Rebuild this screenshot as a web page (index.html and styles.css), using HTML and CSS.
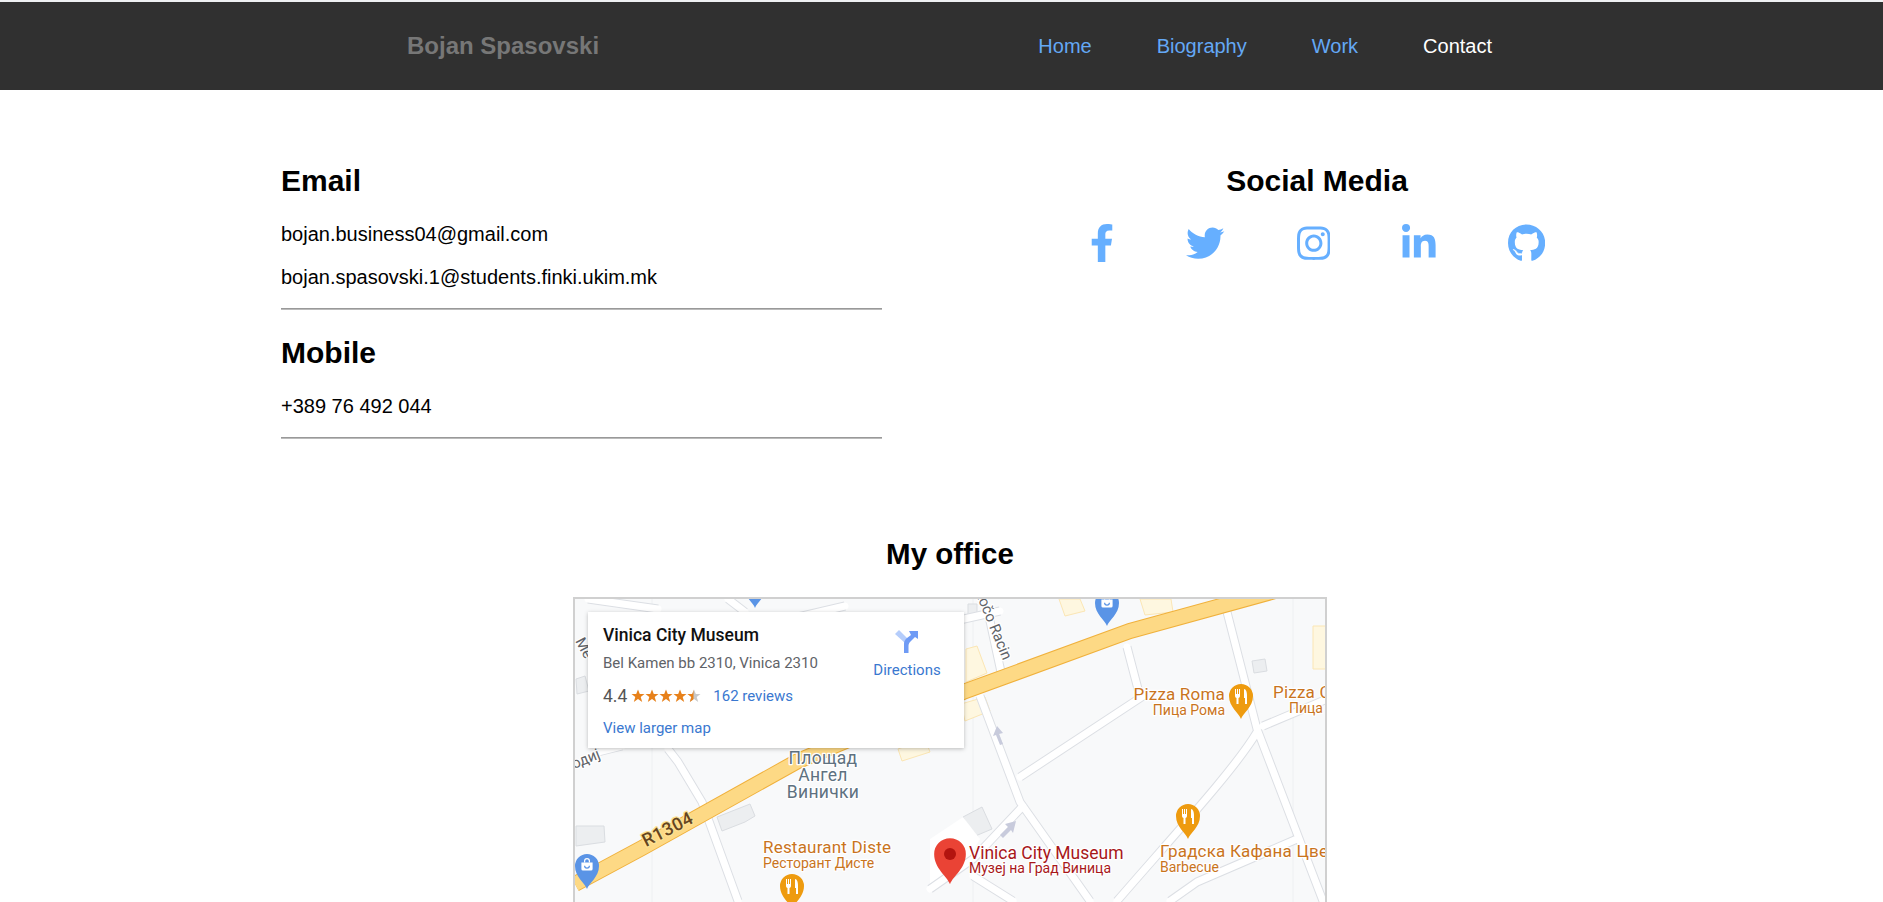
FILE: index.html
```html
<!DOCTYPE html>
<html lang="en">
<head>
<meta charset="utf-8">
<title>Contact - Bojan Spasovski</title>
<link rel="stylesheet" href="styles.css">
</head>
<body>
<nav class="topbar">
  <a class="brand" href="#">Bojan Spasovski</a>
  <ul class="menu">
    <li><a href="#">Home</a></li>
    <li><a href="#">Biography</a></li>
    <li><a href="#">Work</a></li>
    <li><a class="active" href="#">Contact</a></li>
  </ul>
</nav>
<main class="contact">
  <section class="details">
    <h2>Email</h2>
    <p>bojan.business04@gmail.com</p>
    <p>bojan.spasovski.1@students.finki.ukim.mk</p>
    <hr>
    <h2>Mobile</h2>
    <p>+389 76 492 044</p>
    <hr>
  </section>
  <section class="social">
    <h2>Social Media</h2>
    <div class="icons">
      <svg class="i-f" viewBox="0 0 320 512"><path d="M279.14 288l14.22-92.66h-88.91v-60.13c0-25.35 12.42-50.06 52.24-50.06h40.42V6.26S260.43 0 225.36 0c-73.22 0-121.08 44.38-121.08 124.72v70.62H22.89V288h81.39v224h100.17V288z"/></svg>
      <svg class="i-t" viewBox="0 0 512 512"><path d="M459.37 151.716c.325 4.548.325 9.097.325 13.645 0 138.72-105.583 298.558-298.558 298.558-59.452 0-114.68-17.219-161.137-47.106 8.447.974 16.568 1.299 25.34 1.299 49.055 0 94.213-16.568 130.274-44.832-46.132-.975-84.792-31.188-98.112-72.772 6.498.974 12.995 1.624 19.818 1.624 9.421 0 18.843-1.3 27.614-3.573-48.081-9.747-84.143-51.98-84.143-102.985v-1.299c13.969 7.797 30.214 12.67 47.431 13.319-28.264-18.843-46.781-51.005-46.781-87.391 0-19.492 5.197-37.36 14.294-52.954 51.655 63.675 129.3 105.258 216.365 109.807-1.624-7.797-2.599-15.918-2.599-24.04 0-57.828 46.782-104.934 104.934-104.934 30.213 0 57.502 12.67 76.67 33.137 23.715-4.548 46.456-13.32 66.599-25.34-7.798 24.366-24.366 44.833-46.132 57.827 21.117-2.273 41.584-8.122 60.426-16.243-14.292 20.791-32.161 39.308-52.628 54.253z"/></svg>
      <svg class="i-i" viewBox="0 0 448 512"><path d="M224.1 141c-63.6 0-114.9 51.3-114.9 114.9s51.3 114.9 114.9 114.9S339 319.5 339 255.9 287.7 141 224.1 141zm0 189.6c-41.1 0-74.7-33.5-74.7-74.7s33.5-74.7 74.7-74.7 74.7 33.5 74.7 74.7-33.6 74.7-74.7 74.7zm146.4-194.3c0 14.9-12 26.8-26.8 26.8-14.9 0-26.8-12-26.8-26.8s12-26.8 26.8-26.8 26.8 12 26.8 26.8zm76.1 27.2c-1.7-35.9-9.9-67.7-36.2-93.9-26.2-26.2-58-34.4-93.9-36.2-37-2.1-147.9-2.1-184.9 0-35.8 1.7-67.6 9.9-93.9 36.1s-34.4 58-36.2 93.9c-2.1 37-2.1 147.9 0 184.9 1.7 35.9 9.9 67.7 36.2 93.9s58 34.4 93.9 36.2c37 2.1 147.9 2.1 184.9 0 35.9-1.7 67.7-9.9 93.9-36.2 26.2-26.2 34.4-58 36.2-93.9 2.1-37 2.1-147.8 0-184.8zM398.8 388c-7.8 19.6-22.9 34.7-42.6 42.6-29.5 11.7-99.5 9-132.1 9s-102.7 2.6-132.1-9c-19.6-7.8-34.7-22.9-42.6-42.6-11.7-29.5-9-99.5-9-132.1s-2.6-102.7 9-132.1c7.8-19.6 22.9-34.7 42.6-42.6 29.5-11.7 99.5-9 132.1-9s102.7-2.6 132.1 9c19.6 7.8 34.7 22.9 42.6 42.6 11.7 29.5 9 99.5 9 132.1s2.7 102.7-9 132.1z"/></svg>
      <svg class="i-i" viewBox="0 0 448 512"><path d="M100.28 448H7.4V148.9h92.88zM53.79 108.1C24.09 108.1 0 83.5 0 53.8a53.79 53.79 0 0 1 107.58 0c0 29.7-24.1 54.3-53.79 54.3zM447.9 448h-92.68V302.4c0-34.7-.7-79.2-48.29-79.2-48.29 0-55.69 37.7-55.69 76.7V448h-92.78V148.9h89.08v40.8h1.3c12.4-23.5 42.69-48.3 87.88-48.3 94 0 111.28 61.9 111.28 142.3V448z"/></svg>
      <svg class="i-g" viewBox="0 0 496 512"><path d="M165.9 397.4c0 2-2.3 3.6-5.2 3.6-3.3.3-5.6-1.3-5.6-3.6 0-2 2.3-3.6 5.2-3.6 3-.3 5.6 1.3 5.6 3.6zm-31.1-4.5c-.7 2 1.3 4.3 4.3 4.9 2.6 1 5.6 0 6.2-2s-1.3-4.3-4.3-5.2c-2.6-.7-5.5.3-6.2 2.3zm44.2-1.7c-2.9.7-4.9 2.6-4.6 4.9.3 2 2.9 3.3 5.9 2.6 2.9-.7 4.9-2.6 4.6-4.6-.3-1.9-3-3.2-5.9-2.9zM244.8 8C106.1 8 0 113.3 0 252c0 110.9 69.8 205.8 169.5 239.2 12.8 2.3 17.3-5.6 17.3-12.1 0-6.2-.3-40.4-.3-61.4 0 0-70 15-84.7-29.8 0 0-11.4-29.1-27.8-36.6 0 0-22.9-15.7 1.6-15.4 0 0 24.9 2 38.6 25.8 21.9 38.6 58.6 27.5 72.9 20.9 2.3-16 8.8-27.1 16-33.7-55.9-6.2-112.3-14.3-112.3-110.5 0-27.5 7.6-41.3 23.6-58.9-2.6-6.5-11.1-33.3 2.6-67.9 20.9-6.5 69 27 69 27 20-5.6 41.5-8.5 62.8-8.5s42.8 2.9 62.8 8.5c0 0 48.1-33.6 69-27 13.7 34.7 5.2 61.4 2.6 67.9 16 17.7 25.8 31.5 25.8 58.9 0 96.5-58.9 104.2-114.8 110.5 9.2 7.9 17 22.9 17 46.4 0 33.7-.3 75.4-.3 83.6 0 6.5 4.6 14.4 17.3 12.1C428.2 457.8 496 362.9 496 252 496 113.3 383.5 8 244.8 8zM97.2 352.9c-1.3 1-1 3.3.7 5.2 1.6 1.6 3.9 2.3 5.2 1 1.3-1 1-3.3-.7-5.2-1.6-1.6-3.9-2.3-5.2-1zm-10.8-8.1c-.7 1.3.3 2.9 2.3 3.9 1.6 1 3.6.7 4.3-.7.7-1.3-.3-2.9-2.3-3.9-2-.6-3.6-.3-4.3.7zm32.4 35.6c-1.6 1.3-1 4.3 1.3 6.2 2.3 2.3 5.2 2.6 6.5 1 1.3-1.3.7-4.3-1.3-6.2-2.2-2.3-5.2-2.6-6.5-1zm-11.4-14.7c-1.6 1-1.6 3.6 0 5.9 1.6 2.3 4.3 3.3 5.6 2.3 1.6-1.3 1.6-3.9 0-6.2-1.4-2.3-4-3.3-5.6-2z"/></svg>
    </div>
  </section>
</main>
<section class="office">
  <h2>My office</h2>
  <div class="map">
    <svg class="map-canvas" viewBox="0 0 750 450">
      <defs>
        <path id="pin" d="M0 23C-2 17-12 11-12 0A12 12 0 1 1 12 0C12 11 2 17 0 23Z"/>
        <g id="cutlery">
          <path d="M-6-7h1v5h1v-5h1v5h1v-5h1v7c0 1-1 2-1.500 2V8h-2V2c-.5 0-1.500-1-1.500-2z"/>
          <path d="M3-7c2 0 3 3 3 7v8H4V2H3z"/>
        </g>
        <g id="bag">
          <path d="M-7-3H7V5a2 2 0 0 1-2 2H-5a2 2 0 0 1-2-2z"/>
          <path class="bag-handle" d="M-3-3V-5a3 3 0 0 1 6 0V-3"/>
          <path class="bag-smile" d="M-3 1a3 3 0 0 0 6 0"/>
        </g>
        <path id="street-paths" d="M405 97L445 203 515 302M445 178L568 97M552 48L563 90 568 97M652 13L682 130 748 302M682 133C660 170 600 235 542 302M688 127L752 100M448 207L398 260 355 290M722 240L622 283 595 302M398 277L438 302M93 150L103 163 127 203 163 302M13 0L83 10M153 0L170 13M270 7L223 18M23 153L47 147M412 8L426 73M380 22L425 12"/>
      </defs>
      <rect class="land" width="750" height="450"/>
      <path class="tile" d="M77 0V450M398 0V450M718 0V450"/>

      <g class="buildings">
        <path d="M1 227H29L30 243 1 247Z"/>
        <path d="M142 218L175 205 180 217 170 223 147 232Z"/>
        <path d="M388 218L407 208 417 230 398 238Z"/>
        <path d="M677 62L690 60 692 72 679 74Z"/>
        <path d="M1 80L10 77 14 92 2 95Z"/>
        <path d="M393 5H402V20H393Z"/>
      </g>
      <g class="yellow-blocks">
        <path d="M738 27H752V70H738Z"/>
        <path d="M565 0H596L598 13 570 16Z"/>
        <path d="M391 50L402 47 412 74 391 83Z"/>
        <path d="M323 150L350 140 355 153 327 162Z"/>
        <path d="M386 105L410 98 415 112 390 122Z"/>
        <path d="M484 0H505L510 12 490 17Z"/>
      </g>

      <path class="plaza" d="M355 240L388 218 405 240 392 262 355 292Z"/>
      <use class="street-edge" href="#street-paths"/>
      <use class="street-fill" href="#street-paths"/>

      <path class="road-edge" d="M0 285L67 249 223 162 388 93 555 32 700-8"/>
      <path class="road-fill" d="M0 285L67 249 223 162 388 93 555 32 700-8"/>

      <path class="arrow" d="M422 127L418 137 421 136 425 146 428 145 424 135 428 134Z"/>
      <path class="arrow" d="M441 222L430 225 433 228 425 236 428 239 436 231 438 234Z"/>

      <text class="road-label" transform="translate(71 248) rotate(-27)">R1304</text>
      <text class="street-label" text-anchor="end" transform="translate(428 62) rotate(68)">Kočo Racin</text>
      <text class="street-label" transform="translate(0 42) rotate(62)">Ме</text>
      <text class="street-label" transform="translate(-1 170) rotate(-22)">одиј</text>

      <g class="place-label">
        <text x="248" y="165" text-anchor="middle">Площад</text>
        <text x="248" y="182" text-anchor="middle">Ангел</text>
        <text x="248" y="199" text-anchor="middle">Винички</text>
      </g>

      <g class="food-label">
        <text class="big" x="188" y="254">Restaurant Diste</text>
        <text class="small" x="188" y="269">Ресторант Дисте</text>
        <text class="big" x="650" y="101" text-anchor="end">Pizza Roma</text>
        <text class="small" x="650" y="116" text-anchor="end">Пица Рома</text>
        <text class="big" x="698" y="99">Pizza Capri</text>
        <text class="small" x="714" y="114">Пица Капри</text>
        <text class="big" x="585" y="258">Градска Кафана Цвет</text>
        <text class="small" x="585" y="273">Barbecue</text>
      </g>
      <g class="museum-label">
        <text class="big" x="394" y="260">Vinica City Museum</text>
        <text class="small" x="394" y="274">Музеј на Град Виница</text>
      </g>

      <use class="pin-blue" href="#pin" transform="translate(180 -14)"/>
      <use class="pin-blue" href="#pin" transform="translate(532 4)"/>
      <use class="pin-white" href="#bag" transform="translate(532 3) scale(.8)"/>
      <use class="pin-blue" href="#pin" transform="translate(12 267)"/>
      <use class="pin-white" href="#bag" transform="translate(12 266) scale(.8)"/>
      <use class="pin-orange" href="#pin" transform="translate(217 287)"/>
      <use class="pin-white" href="#cutlery" transform="translate(217 287)"/>
      <use class="pin-orange" href="#pin" transform="translate(666 97)"/>
      <use class="pin-white" href="#cutlery" transform="translate(666 97)"/>
      <use class="pin-orange" href="#pin" transform="translate(613 217)"/>
      <use class="pin-white" href="#cutlery" transform="translate(613 217)"/>
      <use class="pin-red" href="#pin" transform="translate(375 255) scale(1.32)"/>
      <circle class="pin-dot" cx="375" cy="255" r="6"/>
    </svg>

    <div class="place-card">
      <div class="place-info">
        <div class="place-name">Vinica City Museum</div>
        <div class="place-address">Bel Kamen bb 2310, Vinica 2310</div>
        <div class="place-rating">
          <span class="score">4.4</span>
          <svg class="stars" viewBox="0 0 70 14">
            <defs>
              <path id="star" d="M7 0.500L8.800 5H13.500L9.700 8 11.200 13 7 10 2.800 13 4.300 8 .5 5H5.200Z"/>
              <clipPath id="half"><rect x="56" width="6.500" height="14"/></clipPath>
            </defs>
            <use class="star-on" href="#star"/>
            <use class="star-on" href="#star" x="14"/>
            <use class="star-on" href="#star" x="28"/>
            <use class="star-on" href="#star" x="42"/>
            <use class="star-off" href="#star" x="56"/>
            <g clip-path="url(#half)"><use class="star-on" href="#star" x="56"/></g>
          </svg>
          <a href="#">162 reviews</a>
        </div>
        <a class="larger" href="#">View larger map</a>
      </div>
      <a class="directions" href="#">
        <svg class="dir-icon" viewBox="0 0 24 24">
          <path class="dir-light" d="M0 4L4 0 13 9 10 13Z"/>
          <path class="dir-dark" d="M9 23V14C9 11 10 10 12 8L16 5 14 1H23V9L20 7 16 11C14 13 13.500 14 13.500 16V23Z"/>
        </svg>
        <span>Directions</span>
      </a>
    </div>
  </div>
</section>
</body>
</html>
```
FILE: styles.css
```css
* { box-sizing: border-box; }
html, body { height: 100%; overflow: hidden; }
body {
  margin: 0;
  background: #fff;
  color: #000;
  font-family: "Liberation Sans", Arial, sans-serif;
}
a { text-decoration: none; }

.topbar {
  display: flex;
  align-items: center;
  justify-content: space-between;
  height: 90px;
  padding: 0 391px 0 407px;
  background: #303030;
  border-top: 2px solid #eef0f2;
}
.brand { color: #777; font-size: 24px; font-weight: 700; }
.menu { display: flex; gap: 65px; margin: 0; padding: 0; list-style: none; }
.menu a { color: #64a8f5; font-size: 20px; }
.menu a.active { color: #fff; }

h2 { margin: 0; font-size: 30px; line-height: 36px; font-weight: 700; }

.contact {
  display: grid;
  grid-template-columns: 601px 1fr;
  column-gap: 150px;
  padding: 73px 281px 0;
}
.details p { margin: 0; font-size: 20px; line-height: 23px; }
.details h2 + p { margin-top: 24px; }
.details p + p { margin-top: 20px; }
.details hr { margin: 19px 0 25px; border: 0; border-top: 1px solid #999; border-bottom: 1px solid #bbb; height: 2px; }
.social { text-align: center; }
.icons {
  display: flex;
  justify-content: center;
  gap: 72px;
  margin: 25px 0 0 1px;
  fill: #66afff;
}
.icons svg { height: 38.4px; display: block; }
.i-f { width: 24px; }
.i-t { width: 38.4px; }
.i-i { width: 33.6px; }
.i-g { width: 37.2px; }

.office { margin-top: 72px; padding-left: 17px; text-align: center; }
.office h2 { font-size: 29.500px; }
.map {
  position: relative;
  width: 754px;
  height: 454px;
  margin: 25px auto 0;
  border: 2px solid #d0d0d0;
  font-family: Roboto, sans-serif;
  text-align: left;
}
.map-canvas { display: block; width: 750px; height: 450px; }

.land { fill: #f8f9fa; }
.tile { fill: none; stroke: #eef0f2; stroke-width: 1; }
.plaza { fill: #fff; }
.buildings path { fill: #eceef0; stroke: #dadde1; stroke-width: 1; }
.yellow-blocks path { fill: #fef7e0; stroke: #fbe6b4; stroke-width: 1; }
.street-edge { fill: none; stroke: #dcdfe4; stroke-width: 9; stroke-linejoin: round; }
.street-fill { fill: none; stroke: #fff; stroke-width: 7; stroke-linejoin: round; stroke-linecap: round; }
.road-edge { fill: none; stroke: #f0b13c; stroke-width: 16; }
.road-fill { fill: none; stroke: #fdd985; stroke-width: 14; }
.arrow { fill: #c8cbdc; }

.map-canvas text { font-family: Roboto, sans-serif; paint-order: stroke; stroke: #fff; stroke-width: 2.5px; stroke-linejoin: round; }
.map-canvas .road-label { font-size: 18px; font-weight: 500; fill: #65451f; letter-spacing: .5px; stroke: #fde293; }
.map-canvas .street-label { font-size: 15px; fill: #5f6368; }
.place-label text { font-size: 17.500px; fill: #5e7180; letter-spacing: .3px; }
.food-label { fill: #c9741d; }
.food-label .big { font-size: 17px; letter-spacing: .2px; }
.food-label .small { font-size: 14px; }
.museum-label { fill: #a8171a; }
.museum-label .big { font-size: 17.500px; }
.museum-label .small { font-size: 14px; }

.pin-blue { fill: #5a94e6; }
.pin-orange { fill: #ee9b0f; }
.pin-red { fill: #ea4335; }
.pin-dot { fill: #b3140f; }
.pin-white { fill: #fff; }
.bag-handle, .bag-smile { fill: none; stroke-width: 1.500; }
.bag-handle { stroke: #fff; }
.bag-smile { stroke: #5a94e6; }

.place-card {
  position: absolute;
  top: 13px;
  left: 13px;
  display: flex;
  justify-content: space-between;
  width: 376px;
  height: 136px;
  padding: 13px 22px 0 15px;
  background: #fff;
  box-shadow: 0 1px 4px rgba(0,0,0,.25);
}
.place-name { font-size: 17.500px; line-height: 21px; font-weight: 500; color: #111; }
.place-address { margin-top: 8px; font-size: 15px; line-height: 18px; color: #5f6368; }
.place-rating { display: flex; align-items: center; height: 22px; margin-top: 13px; font-size: 15px; }
.score { font-size: 17.500px; color: #555; margin-right: 4px; }
.stars { width: 70px; height: 14px; margin-right: 12px; }
.star-on { fill: #e7811b; }
.star-off { fill: #c8c8c8; }
.place-card a { color: #3a78d0; }
.larger { display: block; margin-top: 12px; font-size: 15px; line-height: 18px; }
.directions { display: flex; flex-direction: column; align-items: center; width: 70px; margin-top: 5px; font-size: 15px; line-height: 18px; }
.dir-icon { width: 24px; height: 24px; margin-bottom: 7px; }
.dir-light { fill: #b5cdfb; }
.dir-dark { fill: #6f9bf5; }
```
